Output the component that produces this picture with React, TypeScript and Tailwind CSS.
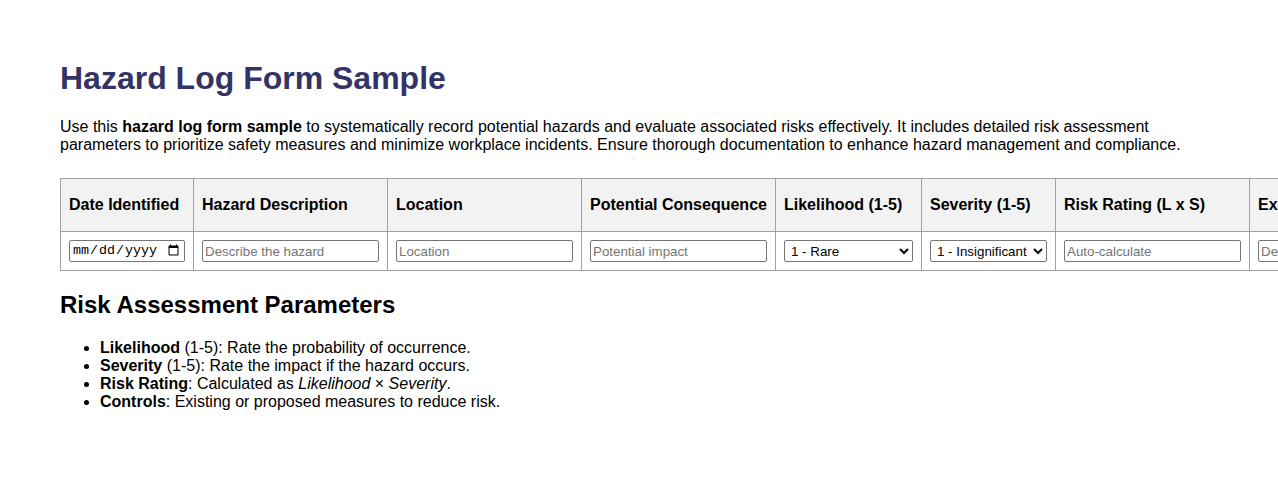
import React from "react";

const inputCls =
  "h-[22px] border border-[#767676] rounded-[2px] px-[2px] text-[13.333px] text-black placeholder:text-[#757575] bg-white block";

export default function App() {
  const cols: { label: string; w: string; cell: React.ReactNode }[] = [
    {
      label: "Date Identified",
      w: "w-[133px] min-w-[133px] max-w-[133px]",
      cell: (
        <input
          type="date"
          className={inputCls + " w-[116px] min-w-0 font-['Liberation_Mono',monospace] text-[12px]"}
        />
      ),
    },
    {
      label: "Hazard Description",
      w: "w-[194px] min-w-[194px]",
      cell: <input type="text" placeholder="Describe the hazard" className={inputCls + " w-[177px]"} />,
    },
    {
      label: "Location",
      w: "w-[194px] min-w-[194px]",
      cell: <input type="text" placeholder="Location" className={inputCls + " w-[177px]"} />,
    },
    {
      label: "Potential Consequence",
      w: "w-[194px] min-w-[194px]",
      cell: <input type="text" placeholder="Potential impact" className={inputCls + " w-[177px]"} />,
    },
    {
      label: "Likelihood (1-5)",
      w: "w-[146px] min-w-[146px]",
      cell: (
        <select className={inputCls + " w-[129px] px-0"} defaultValue="1">
          <option value="1">1 - Rare</option>
          <option value="2">2 - Unlikely</option>
          <option value="3">3 - Possible</option>
          <option value="4">4 - Likely</option>
          <option value="5">5 - Almost Certain</option>
        </select>
      ),
    },
    {
      label: "Severity (1-5)",
      w: "w-[134px] min-w-[134px]",
      cell: (
        <select className={inputCls + " w-[117px] px-0"} defaultValue="1">
          <option value="1">1 - Insignificant</option>
          <option value="2">2 - Minor</option>
          <option value="3">3 - Moderate</option>
          <option value="4">4 - Major</option>
          <option value="5">5 - Catastrophic</option>
        </select>
      ),
    },
    {
      label: "Risk Rating (L x S)",
      w: "w-[194px] min-w-[194px]",
      cell: <input type="text" placeholder="Auto-calculate" className={inputCls + " w-[177px]"} />,
    },
    {
      label: "Existing Controls",
      w: "w-[194px] min-w-[194px]",
      cell: <input type="text" placeholder="Describe controls" className={inputCls + " w-[177px]"} />,
    },
    {
      label: "Responsible Person",
      w: "w-[194px] min-w-[194px]",
      cell: <input type="text" placeholder="Name" className={inputCls + " w-[177px]"} />,
    },
  ];

  return (
    <div className="w-[1278px] h-[486px] overflow-hidden bg-white">
      <div className="pl-[60px] pt-[41px] font-['Liberation_Sans',Arial,sans-serif] text-[16px] leading-[18px] text-black">
        <h1 className="text-[32px] leading-[37px] font-bold text-[#333366] mt-[19px] mb-[21px]">
          Hazard Log Form Sample
        </h1>
        <p className="w-[1140px]">
          Use this <strong className="font-bold">hazard log form sample</strong> to systematically record potential
          hazards and evaluate associated risks effectively. It includes detailed risk assessment parameters to
          prioritize safety measures and minimize workplace incidents. Ensure thorough documentation to enhance hazard
          management and compliance.
        </p>
        <table className="border-collapse mt-[24px]">
          <thead>
            <tr>
              {cols.map((c) => (
                <th
                  key={c.label}
                  className={
                    c.w +
                    " border border-[#a0a0a0] bg-[#f2f2f2] px-2 h-[53px] text-left font-bold whitespace-nowrap align-middle"
                  }
                >
                  {c.label}
                </th>
              ))}
            </tr>
          </thead>
          <tbody>
            <tr>
              {cols.map((c) => (
                <td key={c.label} className="border border-[#a0a0a0] px-2 py-2 align-middle">
                  {c.cell}
                </td>
              ))}
            </tr>
          </tbody>
        </table>
        <h2 className="text-[24px] leading-[28px] font-bold mt-[20px] mb-[20px]">Risk Assessment Parameters</h2>
        <ul className="list-disc pl-[40px]">
          <li>
            <strong>Likelihood</strong> (1-5): Rate the probability of occurrence.
          </li>
          <li>
            <strong>Severity</strong> (1-5): Rate the impact if the hazard occurs.
          </li>
          <li>
            <strong>Risk Rating</strong>: Calculated as <em>Likelihood</em> × <em>Severity</em>.
          </li>
          <li>
            <strong>Controls</strong>: Existing or proposed measures to reduce risk.
          </li>
        </ul>
      </div>
    </div>
  );
}
